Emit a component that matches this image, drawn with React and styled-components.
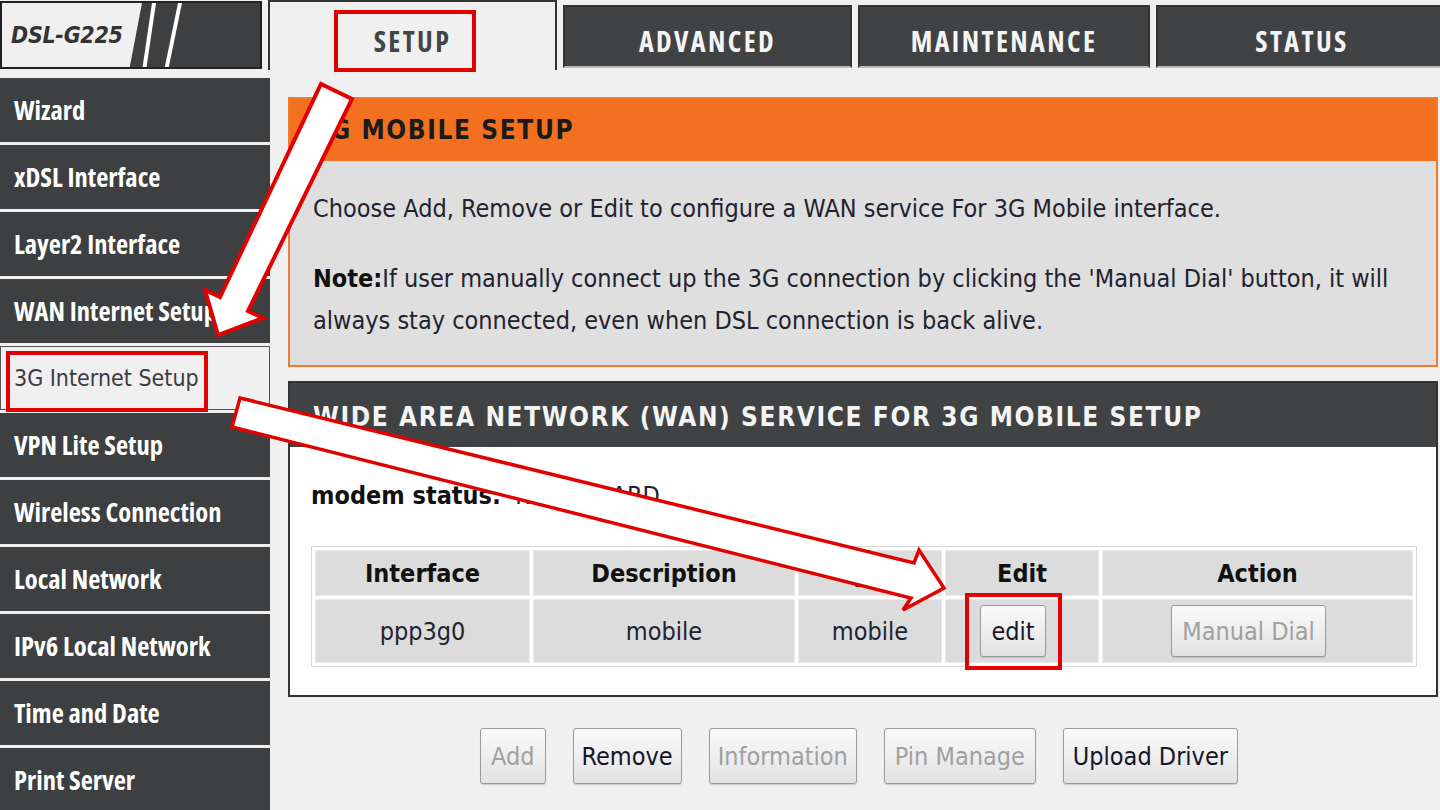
import React from "react";
import styled, { createGlobalStyle, css } from "styled-components";

const GlobalStyle = createGlobalStyle`
  html, body { margin: 0; padding: 0; background: #f0f0f0; }
  body {
    font-family: "DejaVu Sans Condensed", "DejaVu Sans", "Liberation Sans", sans-serif;
    font-stretch: condensed;
    overflow: hidden;
  }
`;

const narrowBold = css`
  font-family: "Open Sans", "DejaVu Sans", sans-serif;
  font-stretch: 75%;
  font-weight: bold;
`;

const Page = styled.div`
  position: relative;
  width: 1440px;
  height: 810px;
  overflow: hidden;
  background: #f0f0f0;
`;

const Header = styled.div`
  display: flex;
  align-items: flex-start;
  height: 70px;
  gap: 6px;
`;

const Logo = styled.div`
  position: relative;
  box-sizing: border-box;
  width: 262px;
  height: 68px;
  margin-top: 1px;
  border: 2px solid #222;
  display: flex;
  align-items: center;
  padding-left: 9px;
  overflow: hidden;
  flex-shrink: 0;
`;

const LogoArt = styled.svg`
  position: absolute;
  inset: 0;
`;

const LogoText = styled.span`
  position: relative;
  font-size: 23px;
  font-weight: bold;
  font-style: italic;
  color: #333;
  letter-spacing: -0.3px;
`;

const Tab = styled.div`
  box-sizing: border-box;
  width: ${(p) => p.$w}px;
  height: ${(p) => (p.$active ? 70 : 63)}px;
  margin-top: ${(p) => (p.$active ? 0 : 5)}px;
  display: flex;
  align-items: center;
  justify-content: center;
  padding-top: ${(p) => (p.$active ? 10 : 9)}px;
  ${narrowBold};
  font-size: 28px;
  letter-spacing: 2.4px;
  color: ${(p) => (p.$active ? "#404548" : "#f4f4f4")};
  background: ${(p) => (p.$active ? "#f0f0f0" : "#404243")};
  border: 2px solid #333;
  border-bottom: ${(p) => (p.$active ? "none" : "2px solid #bbb")};
  flex-shrink: 0;
`;

const Body = styled.div`
  display: flex;
  margin-top: 8px;
`;

const Sidebar = styled.div`
  width: 270px;
  display: flex;
  flex-direction: column;
  gap: 3px;
  flex-shrink: 0;
`;

const SideItem = styled.div`
  box-sizing: border-box;
  height: 64px;
  display: flex;
  align-items: center;
  white-space: nowrap;
  overflow: hidden;
  ${(p) =>
    p.$active
      ? css`
          padding-left: 13px;
          font-size: 23px;
          color: #3c3c44;
          background: #f0f0f0;
          border: 1px solid #555;
        `
      : css`
          padding-left: 14px;
          ${narrowBold};
          font-size: 26.5px;
          color: #ffffff;
          background: #3d3f40;
        `}
`;

const Main = styled.div`
  margin-left: 18px;
  padding-top: 19px;
  width: 1150px;
  display: flex;
  flex-direction: column;
`;

const Box = styled.div`
  box-sizing: border-box;
  width: 1150px;
  border: 2px solid ${(p) => p.$border};
  margin-bottom: 14px;
`;

const BoxTitle = styled.div`
  height: ${(p) => p.$h}px;
  display: flex;
  align-items: center;
  padding-left: 23px;
  padding-top: ${(p) => p.$pt || 0}px;
  box-sizing: border-box;
  font-size: 26px;
  font-weight: bold;
  letter-spacing: 1.6px;
  color: ${(p) => p.$color};
  background: ${(p) => p.$bg};
`;

const BoxBody = styled.div`
  background: ${(p) => p.$bg};
  padding: ${(p) => p.$pad};
`;

const Para = styled.p`
  margin: 0 0 ${(p) => p.$mb || 0}px 0;
  font-size: 25px;
  line-height: 42px;
  color: #222230;
`;

const Bold = styled.b`
  font-weight: bold;
  color: #111;
`;

const Table = styled.table`
  width: 1104px;
  table-layout: fixed;
  border-collapse: separate;
  border-spacing: 3px;
  border: 1px solid #dadada;
  background: #fff;
  margin-top: 29px;
`;

const Th = styled.td`
  height: 42px;
  background: #dcdcdc;
  border: 1px solid #eaeaea;
  text-align: center;
  font-size: 25px;
  font-weight: bold;
  color: #111;
`;

const Td = styled.td`
  box-sizing: border-box;
  height: 64px;
  background: #dcdcdc;
  border: 1px solid #eaeaea;
  text-align: center;
  padding: 0 ${(p) => p.$padR || 0}px 0 0;
  font-size: 25px;
  color: #222230;
`;

const Btn = styled.button`
  box-sizing: border-box;
  height: ${(p) => p.$h || 52}px;
  padding: 0 ${(p) => p.$px || 10}px;
  font-family: inherit;
  font-stretch: condensed;
  font-size: 25px;
  color: ${(p) => (p.disabled ? "#a0a0a0" : "#15152a")};
  background: linear-gradient(#fafafa, #e2e2e2);
  border: 1px solid #9a9a9a;
  border-radius: 3px;
  box-shadow: 0 1px 1px rgba(0, 0, 0, 0.15);
`;

const ButtonRow = styled.div`
  display: flex;
  justify-content: center;
  gap: 27px;
  margin-top: 17px;
  padding-right: 8px;
`;

const Overlay = styled.svg`
  position: absolute;
  left: 0;
  top: 0;
  pointer-events: none;
`;

const tabs = [
  { label: "SETUP", w: 289, active: true },
  { label: "ADVANCED", w: 289 },
  { label: "MAINTENANCE", w: 292 },
  { label: "STATUS", w: 292 },
];

const menu = [
  "Wizard",
  "xDSL Interface",
  "Layer2 Interface",
  "WAN Internet Setup",
  "3G Internet Setup",
  "VPN Lite Setup",
  "Wireless Connection",
  "Local Network",
  "IPv6 Local Network",
  "Time and Date",
  "Print Server",
];

const actions = [
  { label: "Add", disabled: true, px: 10 },
  { label: "Remove", px: 8 },
  { label: "Information", disabled: true, px: 8 },
  { label: "Pin Manage", disabled: true, px: 10 },
  { label: "Upload Driver", px: 9 },
];

export default function App() {
  return (
    <Page>
      <GlobalStyle />
      <Header>
        <Logo>
          <LogoArt width="262" height="68" viewBox="0 0 262 68">
            <polygon points="140,0 262,0 262,68 127,68" fill="#3d3f40" />
            <polygon points="150,0 154,0 144,68 140,68" fill="#fff" />
            <polygon points="176,0 180,0 166,68 162,68" fill="#fff" />
          </LogoArt>
          <LogoText>DSL-G225</LogoText>
        </Logo>
        {tabs.map((t) => (
          <Tab key={t.label} $w={t.w} $active={t.active}>
            {t.label}
          </Tab>
        ))}
      </Header>
      <Body>
        <Sidebar>
          {menu.map((m) => (
            <SideItem key={m} $active={m === "3G Internet Setup"}>
              {m}
            </SideItem>
          ))}
        </Sidebar>
        <Main>
          <Box $border="#f07a2e">
            <BoxTitle $h={62} $bg="#f37021" $color="#1a1a1a">
              3G MOBILE SETUP
            </BoxTitle>
            <BoxBody $bg="#dfdfdf" $pad="27px 23px 23px">
              <Para $mb={28}>
                Choose Add, Remove or Edit to configure a WAN service For 3G Mobile interface.
              </Para>
              <Para>
                <Bold>Note:</Bold>If user manually connect up the 3G connection by clicking the 'Manual Dial' button, it will
                always stay connected, even when DSL connection is back alive.
              </Para>
            </BoxBody>
          </Box>
          <Box $border="#333">
            <BoxTitle $h={64} $pt={4} $bg="#404243" $color="#f4f4f4">
              WIDE AREA NETWORK (WAN) SERVICE FOR 3G MOBILE SETUP
            </BoxTitle>
            <BoxBody $bg="#ffffff" $pad="28px 21px 28px">
              <Para>
                <Bold>modem status:</Bold>&nbsp; NO 3G CARD
              </Para>
              <Table>
                <colgroup>
                  <col style={{ width: 215 }} />
                  <col style={{ width: 262 }} />
                  <col style={{ width: 144 }} />
                  <col style={{ width: 154 }} />
                  <col style={{ width: 311 }} />
                </colgroup>
                <tbody>
                  <tr>
                    <Th>Interface</Th>
                    <Th>Description</Th>
                    <Th>Type</Th>
                    <Th>Edit</Th>
                    <Th>Action</Th>
                  </tr>
                  <tr>
                    <Td>ppp3g0</Td>
                    <Td>mobile</Td>
                    <Td>mobile</Td>
                    <Td $padR={18}>
                      <Btn>edit</Btn>
                    </Td>
                    <Td $padR={18}>
                      <Btn disabled>Manual Dial</Btn>
                    </Td>
                  </tr>
                </tbody>
              </Table>
            </BoxBody>
          </Box>
          <ButtonRow>
            {actions.map((a) => (
              <Btn key={a.label} disabled={a.disabled} $h={56} $px={a.px}>
                {a.label}
              </Btn>
            ))}
          </ButtonRow>
        </Main>
      </Body>
      <Overlay width="1440" height="810" viewBox="0 0 1440 810">
        <g fill="none" stroke="#e30000" strokeWidth="4">
          <rect x="336" y="12" width="138" height="58" />
          <rect x="8" y="353" width="198" height="57" />
          <rect x="967" y="595" width="93" height="73" />
        </g>
        <polygon
          points="321,84 352,99 248,311 263,318 218,335 205,290 220,297"
          fill="#fff"
          stroke="#e30000"
          strokeWidth="4"
          strokeLinejoin="miter"
        />
        <polygon
          points="240,398 914,563 919,550 944,588 903,610 911,598 232,427"
          fill="#fff"
          stroke="#e30000"
          strokeWidth="3.5"
          strokeLinejoin="miter"
        />
      </Overlay>
    </Page>
  );
}
